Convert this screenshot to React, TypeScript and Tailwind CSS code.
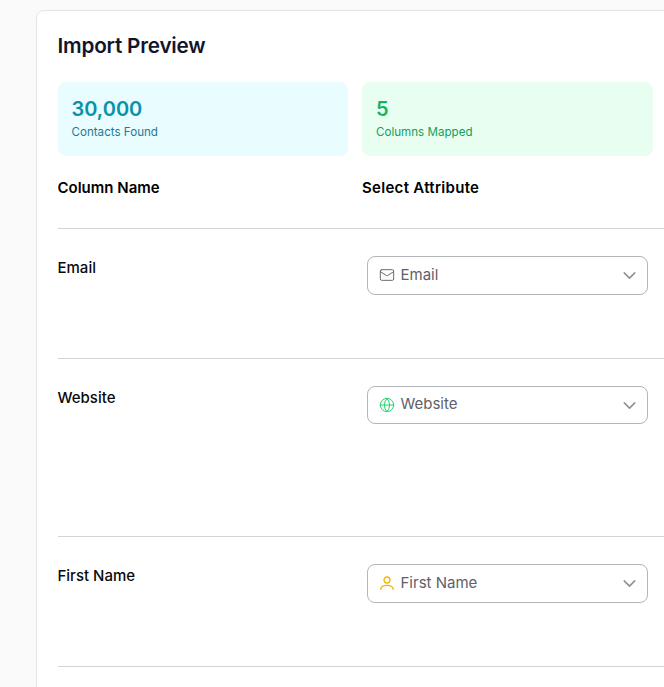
import { ChevronDown, Globe, Mail } from "lucide-react";
import type { ReactNode } from "react";

function Stat({ value, label, bg, valueColor, labelColor }: { value: string; label: string; bg: string; valueColor: string; labelColor: string }) {
  return (
    <div className={`h-[74px] rounded-lg px-[14px] pt-[14px] ${bg}`}>
      <div className={`text-[20px] leading-[26px] font-semibold ${valueColor}`}>{value}</div>
      <div className={`mt-[2px] text-[11.6px] leading-[16px] ${labelColor}`}>{label}</div>
    </div>
  );
}

function Row({ name, icon, height, selectHeight }: { name: string; icon: ReactNode; height: string; selectHeight: string }) {
  return (
    <div className={`grid grid-cols-[304.5px_1fr] border-b border-[#d4d4d8] ${height}`}>
      <div className="pt-[29px] text-[15px] leading-[20px] font-medium text-[#09090b]">{name}</div>
      <div className="pt-[27px] pl-[4.5px]">
        <div className={`flex w-[281px] items-center rounded-lg border border-[#b4b4bb] bg-white pr-[7px] pl-[11px] ${selectHeight}`}>
          <span className="mb-[1px]">{icon}</span>
          <span className="ml-[6px] flex-1 pb-[1px] text-[15px] text-[#5f6069]">{name}</span>
          <ChevronDown className="h-[21px] w-[21px] text-[#8f8f96]" strokeWidth={1.75} />
        </div>
      </div>
    </div>
  );
}

export default function App() {
  return (
    <div className="h-[687px] w-[664px] overflow-hidden bg-[#fafafa] pt-[10px] pl-[36px] font-['Inter',sans-serif]">
      <div className="h-[720px] w-[700px] rounded-t-lg rounded-l-lg border border-[#e4e4e7] bg-white pt-[21px] pl-[20.5px]">
        <h2 className="text-[20.7px] leading-[28px] font-semibold tracking-[-0.2px] text-[#12152a]">Import Preview</h2>
        <div className="mt-[22px] grid w-[595px] grid-cols-2 gap-[14px]">
          <Stat value="30,000" label="Contacts Found" bg="bg-[#e9fcff]" valueColor="text-[#0891a8]" labelColor="text-[#1f7a94]" />
          <Stat value="5" label="Columns Mapped" bg="bg-[#e8fef1]" valueColor="text-[#16b364]" labelColor="text-[#16a05a]" />
        </div>
        <div className="w-[640px]">
          <div className="grid h-[73px] grid-cols-[304.5px_1fr] border-b border-[#d4d4d8] pt-[22px] text-[15px] leading-[20px] font-semibold text-black">
            <div>Column Name</div>
            <div className="tracking-[0.3px]">Select Attribute</div>
          </div>
          <Row name="Email" height="h-[130px]" selectHeight="h-[39px]" icon={<Mail className="h-[16px] w-[16px] text-[#6b6c75]" strokeWidth={1.5} />} />
          <Row name="Website" height="h-[178px]" selectHeight="h-[38px]" icon={<Globe className="h-[16px] w-[16px] text-[#22d36b]" strokeWidth={1.5} />} />
          <Row
            name="First Name"
            height="h-[130px]"
            selectHeight="h-[39px]"
            icon={
              <svg viewBox="0 0 16 16" fill="none" stroke="currentColor" strokeWidth="1.3" strokeLinecap="round" className="h-[16px] w-[16px] text-[#f5b301]">
                <circle cx="8" cy="5" r="3" />
                <path d="M1.8 14.4c0-2.6 2.2-4 6.2-4s6.2 1.4 6.2 4" />
              </svg>
            }
          />
        </div>
      </div>
    </div>
  );
}
